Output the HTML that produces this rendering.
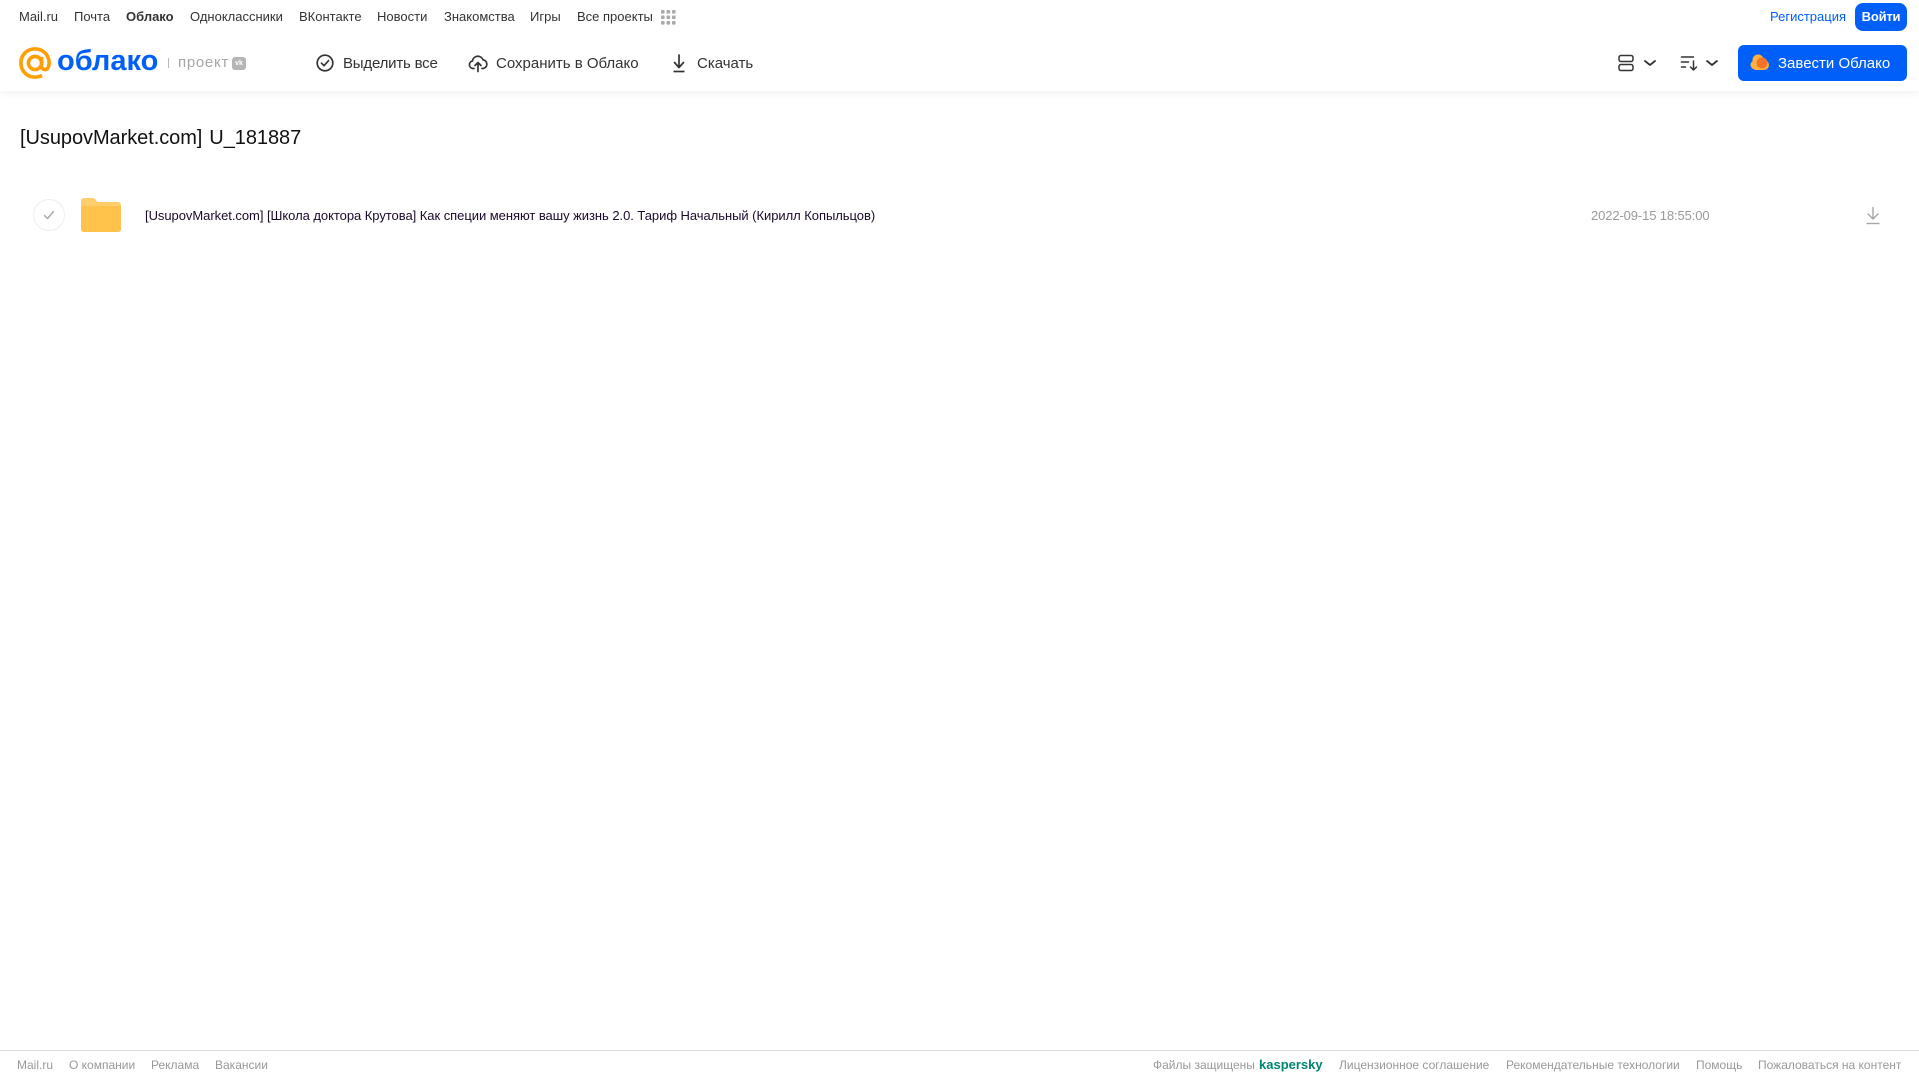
<!DOCTYPE html>
<html lang="ru">
<head>
<meta charset="utf-8">
<title>Облако</title>
<style>
html,body{margin:0;padding:0;background:#fff;width:1919px;height:1079px;overflow:hidden}
body{font-family:"Liberation Sans",sans-serif;position:relative}
.t{position:absolute;white-space:nowrap;line-height:1}
.n{font-size:13px;color:#333;top:10px}
.b{font-size:15px;color:#333;top:56px}
.f{font-size:12px;color:#999;top:1059px}
svg{position:absolute;display:block}
</style>
</head>
<body>
<div style="position:absolute;left:0;top:0;width:1919px;height:91px;background:#fff;box-shadow:0 2px 8px rgba(0,0,0,.06)"></div>

<span class="t n" style="left:19px">Mail.ru</span>
<span class="t n" style="left:74px">Почта</span>
<span class="t n" style="left:126px;font-weight:bold">Облако</span>
<span class="t n" style="left:190px">Одноклассники</span>
<span class="t n" style="left:299px">ВКонтакте</span>
<span class="t n" style="left:377px">Новости</span>
<span class="t n" style="left:444px">Знакомства</span>
<span class="t n" style="left:530px">Игры</span>
<span class="t n" style="left:577px">Все проекты</span>
<svg style="left:661px;top:10px" width="15" height="15" viewBox="0 0 15 15" fill="#aaa">
<rect x="0" y="0" width="3.6" height="3.6" rx=".8"/><rect x="5.5" y="0" width="3.6" height="3.6" rx=".8"/><rect x="11" y="0" width="3.6" height="3.6" rx=".8"/>
<rect x="0" y="5.5" width="3.6" height="3.6" rx=".8"/><rect x="5.5" y="5.5" width="3.6" height="3.6" rx=".8"/><rect x="11" y="5.5" width="3.6" height="3.6" rx=".8"/>
<rect x="0" y="11" width="3.6" height="3.6" rx=".8"/><rect x="5.5" y="11" width="3.6" height="3.6" rx=".8"/><rect x="11" y="11" width="3.6" height="3.6" rx=".8"/>
</svg>

<svg style="left:19px;top:47px" width="32" height="32" viewBox="0 0 34 34" fill="none" stroke="#ff9e00" stroke-width="3.8">
<circle cx="17" cy="17" r="7"/>
<path d="M24 10.500v9c0 3 1.700 4.500 3.800 4.500 2.500 0 4.200-3 4.200-7C32 8.500 25.500 2 17 2S2 8.500 2 17s6.500 15 15 15c3 0 5.500-.7 7.500-1.800"/>
</svg>
<span class="t" style="left:57px;top:47px;font-size:29px;font-weight:bold;color:#005ff9;letter-spacing:0">облако</span>
<div style="position:absolute;left:168px;top:58px;width:1px;height:10px;background:#bbb"></div>
<span class="t" style="left:178px;top:55px;font-size:15px;color:#a6a6a6;letter-spacing:.7px">проект</span>
<div style="position:absolute;left:232px;top:57px;width:14px;height:13px;border-radius:3px;background:#b5b5b5;color:#fff;font-size:7px;font-weight:bold;line-height:13px;text-align:center">vk</div>

<svg style="left:315px;top:53px" width="20" height="20" viewBox="0 0 20 20" fill="none" stroke="#333" stroke-width="1.700" stroke-linecap="round" stroke-linejoin="round">
<circle cx="10" cy="10" r="7.800"/><path d="M6.500 10.200l2.500 2.500 4.500-5"/>
</svg>
<span class="t b" style="left:343px;letter-spacing:-.2px">Выделить все</span>

<svg style="left:468px;top:53px" width="20" height="20" viewBox="0 0 20 20" fill="none" stroke="#333" stroke-width="1.700" stroke-linecap="round" stroke-linejoin="round">
<path d="M6 15.500H5a3.800 3.800 0 0 1-.6-7.500A5.500 5.500 0 0 1 15 6.800a4.400 4.400 0 0 1 .2 8.700H14"/><path d="M10 18.500V10M7 12.500L10 9.500l3 3"/>
</svg>
<span class="t b" style="left:496px">Сохранить в Облако</span>

<svg style="left:669px;top:53px" width="20" height="20" viewBox="0 0 20 20" fill="none" stroke="#333" stroke-width="1.700" stroke-linecap="round" stroke-linejoin="round">
<path d="M10 2v12M5.500 9.500l4.500 5 4.500-5"/><path d="M4.500 18.500h11" stroke-linecap="butt"/>
</svg>
<span class="t b" style="left:697px">Скачать</span>

<svg style="left:1617px;top:54px" width="18" height="18" viewBox="0 0 18 18" fill="none" stroke="#333" stroke-width="1.500">
<rect x="2" y="1.500" width="14" height="6" rx="2"/><rect x="2" y="10.500" width="14" height="6" rx="2"/>
</svg>
<svg style="left:1643px;top:58px" width="14" height="10" viewBox="0 0 14 10" fill="none" stroke="#333" stroke-width="1.800" stroke-linecap="round" stroke-linejoin="round"><path d="M2 3l5 4 5-4"/></svg>
<svg style="left:1680px;top:54px" width="19" height="18" viewBox="0 0 19 18" fill="none" stroke="#333" stroke-width="1.500" stroke-linecap="round" stroke-linejoin="round">
<path d="M1.500 3h12M1.500 8h7M1.500 13h4"/><path d="M13.500 7v9M10.500 13l3 3 3-3"/>
</svg>
<svg style="left:1705px;top:58px" width="14" height="10" viewBox="0 0 14 10" fill="none" stroke="#333" stroke-width="1.800" stroke-linecap="round" stroke-linejoin="round"><path d="M2 3l5 4 5-4"/></svg>

<span class="t" style="left:1770px;top:10px;font-size:13px;color:#005ff9">Регистрация</span>
<div style="position:absolute;left:1855px;top:3px;width:52px;height:28px;border-radius:8px;background:#005ff9;color:#fff;font-size:13px;font-weight:bold;letter-spacing:-.2px;line-height:27px;text-align:center">Войти</div>
<div style="position:absolute;left:1738px;top:45px;width:169px;height:36px;border-radius:6px;background:#005ff9"></div>
<svg style="left:1750px;top:54px" width="20" height="17" viewBox="0 0 20 17">
<circle cx="8" cy="6" r="5.500" fill="#ffb13b"/><circle cx="5" cy="11" r="4.500" fill="#ffb13b"/><circle cx="14" cy="11" r="5" fill="#ffb13b"/><rect x="5" y="9" width="10" height="7" fill="#ffb13b"/>
<circle cx="12" cy="9" r="5.500" fill="#f5742a"/>
</svg>
<span class="t" style="left:1778px;top:56px;font-size:15px;color:#fff">Завести Облако</span>

<span class="t" style="left:20px;top:128px;font-size:20px;word-spacing:1.500px;letter-spacing:-.06px;color:#111">[UsupovMarket.com] U_181887</span>

<div style="position:absolute;left:33px;top:199px;width:30px;height:30px;border:1px solid #efefef;border-radius:50%;background:#fff"></div>
<svg style="left:42px;top:209px" width="14" height="12" viewBox="0 0 14 12" fill="none" stroke="#aaa" stroke-width="1.500" stroke-linecap="round" stroke-linejoin="round"><path d="M2.500 6.500l3 3 6-7"/></svg>

<svg style="left:81px;top:198px" width="40" height="34" viewBox="0 0 40 34">
<path d="M0 3a3 3 0 0 1 3-3h8c2 0 3 .7 3.500 1.700S16 4 18 4h19a3 3 0 0 1 3 3v24a3 3 0 0 1-3 3H3a3 3 0 0 1-3-3z" fill="#ffce6a"/>
<path d="M0 10a2 2 0 0 1 2-2h36a2 2 0 0 1 2 2v21a3 3 0 0 1-3 3H3a3 3 0 0 1-3-3z" fill="#ffc24a"/>
</svg>
<span class="t" style="left:145px;top:209px;font-size:13px;letter-spacing:-.045px;color:#1a0a2a">[UsupovMarket.com] [Школа доктора Крутова] Как специи меняют вашу жизнь 2.0. Тариф Начальный (Кирилл Копыльцов)</span>
<span class="t" style="left:1591px;top:209px;font-size:13px;letter-spacing:-.12px;color:#999">2022-09-15 18:55:00</span>
<svg style="left:1864px;top:206px" width="18" height="19" viewBox="0 0 18 19" fill="none" stroke="#a6a6a6" stroke-width="1.400" stroke-linecap="round" stroke-linejoin="round">
<path d="M9 1.500v11M4 8l5 5 5-5"/><path d="M2.500 17.500h13" stroke-linecap="butt"/>
</svg>

<div style="position:absolute;left:0;top:1050px;width:1919px;height:1px;background:#ddd"></div>
<span class="t f" style="left:17px">Mail.ru</span>
<span class="t f" style="left:69px">О компании</span>
<span class="t f" style="left:151px">Реклама</span>
<span class="t f" style="left:215px">Вакансии</span>
<span class="t f" style="left:1153px">Файлы защищены</span>
<span class="t f" style="left:1259px;top:1058px;font-size:13px;font-weight:bold;color:#00856f">kaspersky</span>
<span class="t f" style="left:1339px">Лицензионное соглашение</span>
<span class="t f" style="left:1506px">Рекомендательные технологии</span>
<span class="t f" style="left:1696px">Помощь</span>
<span class="t f" style="left:1758px">Пожаловаться на контент</span>
</body>
</html>
